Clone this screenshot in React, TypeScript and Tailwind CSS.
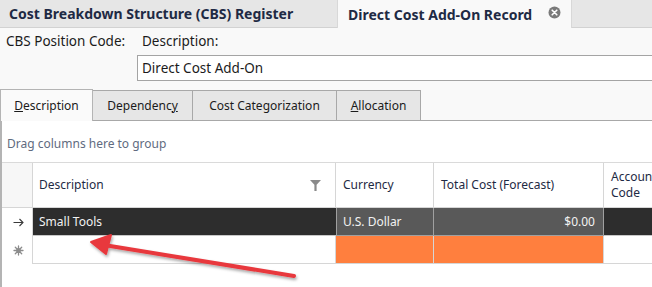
import React from "react";

const font = { fontFamily: '"Noto Sans", "Open Sans", sans-serif' };

function CloseIcon() {
  return (
    <svg width="13" height="13" viewBox="0 0 13 13">
      <circle cx="6.5" cy="6.5" r="6" fill="#7a7a7a" />
      <path d="M4.2 4.2 L8.8 8.8 M8.8 4.2 L4.2 8.8" stroke="#fff" strokeWidth="1.6" strokeLinecap="round" />
    </svg>
  );
}

function Funnel() {
  return (
    <svg width="11" height="11" viewBox="0 0 11 11">
      <path d="M0 0 H11 L6.6 4.8 V11 H4.4 V4.8 Z" fill="#8a8a8a" />
    </svg>
  );
}

function RowArrow() {
  return (
    <svg width="11" height="9" viewBox="0 0 11 9">
      <path d="M0.5 4.5 H10 M6.5 1 L10 4.5 L6.5 8" fill="none" stroke="#3a3a3a" strokeWidth="1.1" />
    </svg>
  );
}

function NewRowStar() {
  return (
    <svg width="11" height="11" viewBox="0 0 11 11">
      <g stroke="#8c8c8c" strokeWidth="1.3" strokeLinecap="round">
        <path d="M5.5 1 V10 M1 5.5 H10 M2.3 2.3 L8.7 8.7 M8.7 2.3 L2.3 8.7" />
      </g>
      <circle cx="5.5" cy="5.5" r="2.4" fill="#8c8c8c" />
    </svg>
  );
}

export default function App() {
  return (
    <div className="relative w-[652px] h-[287px] overflow-hidden bg-[#f9f9f9] text-[12px] text-[#1b1b1b]" style={font}>
      {/* document tabs */}
      <div className="flex h-[28px] bg-[#e6e6e6]">
        <div className="flex w-[337px] items-center border-b border-[#d2d2d2] pl-[9px] text-[14px] font-bold text-[#1e2a44]">
          Cost Breakdown Structure (CBS) Register
        </div>
        <div className="flex w-[235px] items-center border-l border-r border-[#d8d8d8] bg-[#f9f9f9] pl-[10px] text-[14px] font-bold text-[#1e2a44]">
          <span>Direct Cost Add-On Record</span>
          <span className="ml-[16px] mt-[-4px]"><CloseIcon /></span>
        </div>
        <div className="flex-1 border-b border-[#d2d2d2]" />
      </div>

      {/* form */}
      <div className="flex h-[27px] items-center text-[13.5px] text-[#1b1b1b]">
        <span className="pl-[6px] w-[142px]">CBS Position Code:</span>
        <span>Description:</span>
      </div>
      <div className="flex h-[34px] text-[13.5px]">
        <div className="w-[137px]" />
        <div className="flex h-[26px] flex-1 items-center border border-[#a4a4a4] border-r-0 bg-white pl-[4px]">
          Direct Cost Add-On
        </div>
      </div>

      {/* page tabs */}
      <div className="flex h-[32px] items-end">
        <div className="flex h-[32px] w-[93px] items-center justify-center border-l border-r border-t border-[#b4b4b4] bg-[#fafafa]">
          <span><span className="underline">D</span>escription</span>
        </div>
        <div className="flex h-[31px] w-[100px] items-center justify-center border-b border-r border-t border-[#a8a8a8] bg-[#e6e6e6]">
          <span>Dependenc<span className="underline">y</span></span>
        </div>
        <div className="flex h-[31px] w-[144px] items-center justify-center border-b border-r border-t border-[#a8a8a8] bg-[#e6e6e6]">
          Cost Categorization
        </div>
        <div className="flex h-[31px] w-[84px] items-center justify-center border-b border-r border-t border-[#a8a8a8] bg-[#e6e6e6]">
          <span><span className="underline">A</span>llocation</span>
        </div>
        <div className="h-[31px] flex-1 border-b border-[#a8a8a8]" />
      </div>

      {/* content */}
      <div className="h-[200px] border-l-2 border-[#b4b4b4] bg-white">
        <div className="flex h-[42px] items-center border-b border-[#dadada] pl-[5px] pt-[4px] text-[#5f6b80]">
          Drag columns here to group
        </div>
        <div className="grid grid-cols-[31px_303px_98px_170px_60px] text-[#1e2a44]">
          {/* header */}
          <div className="h-[45px] border-r border-b border-[#d6d6d6] bg-[#f7f7f7]" />
          <div className="flex h-[45px] items-center justify-between border-r border-b border-[#d6d6d6] bg-white pl-[6px] pr-[14px]">
            <span>Description</span>
            <Funnel />
          </div>
          <div className="flex h-[45px] items-center border-r border-b border-[#d6d6d6] bg-white pl-[7px]">Currency</div>
          <div className="flex h-[45px] items-center border-r border-b border-[#d6d6d6] bg-white pl-[7px]">Total Cost (Forecast)</div>
          <div className="flex h-[45px] flex-col justify-center border-b border-[#d6d6d6] bg-white pl-[7px] leading-[16px]">
            <span>Account</span>
            <span>Code</span>
          </div>
          {/* row 1 */}
          <div className="flex h-[28px] items-center justify-center border-r border-[#d6d6d6] bg-white pl-[2px]"><RowArrow /></div>
          <div className="flex h-[28px] items-center border-b border-[#c8c8c8] bg-[#2d2d2d] pl-[6px] text-[#f2f2f2]">Small Tools</div>
          <div className="flex h-[28px] items-center border-x border-b border-[#a0a0a0] bg-[#595959] pl-[6px] text-[#f2f2f2]">U.S. Dollar</div>
          <div className="flex h-[28px] items-center justify-end border-r border-b border-[#a0a0a0] bg-[#595959] pr-[8px] text-[#f2f2f2]">$0.00</div>
          <div className="h-[28px] border-b border-[#c8c8c8] bg-[#2d2d2d]" />
          {/* row 2 */}
          <div className="flex h-[28px] items-center justify-center border-r border-[#d6d6d6] bg-white pl-[2px]"><NewRowStar /></div>
          <div className="h-[28px] border-r border-b border-[#d6d6d6] bg-white" />
          <div className="h-[28px] border-r border-b border-[#d6d6d6] bg-[#ff7f3e]" />
          <div className="h-[28px] border-r border-b border-[#d6d6d6] bg-[#ff7f3e]" />
          <div className="h-[28px] border-b border-[#d6d6d6] bg-white" />
        </div>
      </div>

      {/* red annotation arrow */}
      <svg className="absolute left-0 top-0" width="652" height="287" viewBox="0 0 652 287">
        <defs>
          <filter id="sh" x="-10%" y="-10%" width="130%" height="160%">
            <feDropShadow dx="1" dy="2" stdDeviation="1.5" floodColor="#000" floodOpacity="0.35" />
          </filter>
        </defs>
        <g filter="url(#sh)">
          <line x1="294" y1="276" x2="104" y2="245" stroke="#e8383d" strokeWidth="4" strokeLinecap="round" />
          <path d="M91 242 L111 235 L106 254 Z" fill="#e8383d" stroke="#e8383d" strokeWidth="2" strokeLinejoin="round" />
        </g>
      </svg>
    </div>
  );
}
